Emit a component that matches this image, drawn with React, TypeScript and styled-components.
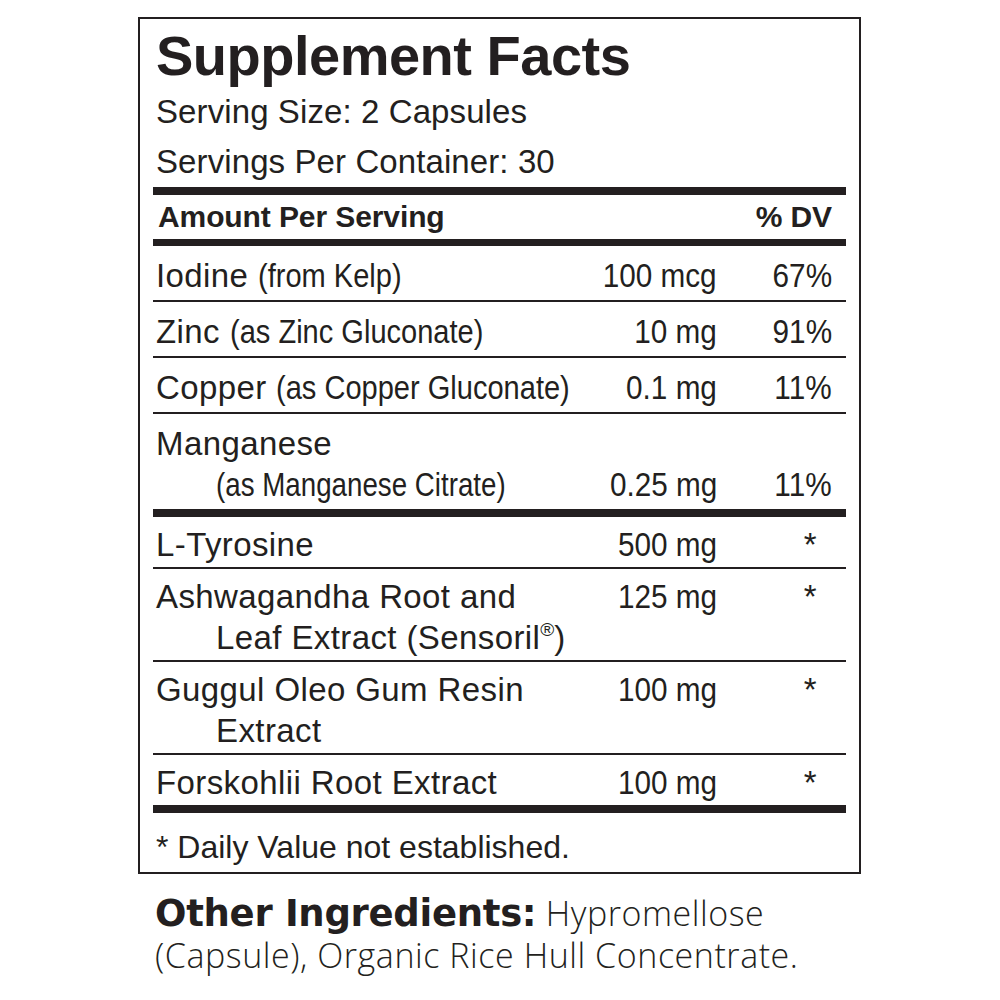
import React from "react";
import styled, { createGlobalStyle } from "styled-components";

const Global = createGlobalStyle`
  html, body { margin: 0; padding: 0; background: #ffffff; }
  body { font-family: "Liberation Sans", Arial, sans-serif; color: #231f20; }
`;

const Page = styled.div`
  padding: 17px 0 20px 138px;
`;

const Panel = styled.section`
  width: 723px;
  box-sizing: border-box;
  border: 2px solid #231f20;
  padding: 0 13px;
`;

const Title = styled.h1`
  margin: 0;
  padding: 7px 0 0 3px;
  font: 700 56px/60px "Liberation Sans", Arial, sans-serif;
  letter-spacing: -0.5px;
`;

const ServingInfo = styled.div`
  padding: 1px 0 0 3px;
`;

const InfoLine = styled.p`
  margin: 0;
  font: 400 33px/50px "Liberation Sans", Arial, sans-serif;
  letter-spacing: 0.1px;
`;

const Bar = styled.div<{ $h: number }>`
  height: ${(p) => p.$h}px;
  background: #231f20;
`;

const HeaderRow = styled.div`
  display: flex;
  justify-content: space-between;
  padding: 0 14px 0 5px;
  font: 700 30px/44px "Liberation Sans", Arial, sans-serif;
  letter-spacing: -0.1px;
`;

const Section = styled.div``;

const Row = styled.div<{ $loose?: boolean }>`
  display: grid;
  grid-template-columns: minmax(0, 1fr) auto 115px;
  padding: ${(p) => (p.$loose ? "9px 14px 4px 3px" : "7px 14px 2px 3px")};
  font: 400 33px/41px "Liberation Sans", Arial, sans-serif;
  letter-spacing: 0.4px;
  border-bottom: 2px solid #231f20;
  &:last-child {
    border-bottom: none;
  }
`;

const Label = styled.div`
  padding-left: 60px;
  text-indent: -60px;
  white-space: nowrap;
`;

const Cond = styled.span<{ $origin: "left" | "right"; $scale: number }>`
  display: inline-block;
  text-indent: 0;
  letter-spacing: 0;
  transform: scaleX(${(p) => p.$scale});
  transform-origin: ${(p) => p.$origin} center;
  white-space: nowrap;
`;

const Amount = styled.div<{ $end?: boolean }>`
  text-align: right;
  white-space: nowrap;
  align-self: ${(p) => (p.$end ? "end" : "start")};
`;

const DV = styled.div<{ $star?: boolean; $end?: boolean }>`
  text-align: right;
  padding-right: ${(p) => (p.$star ? "15px" : "0")};
  align-self: ${(p) => (p.$end ? "end" : "start")};
`;

const Reg = styled.sup`
  font-size: 19px;
  vertical-align: 13px;
  line-height: 0;
  letter-spacing: 0;
`;

const Note = styled.p`
  margin: 0;
  padding: 14px 0 5px 3px;
  font: 400 32px/40px "Liberation Sans", Arial, sans-serif;
  letter-spacing: 0;
`;

const Other = styled.p`
  margin: 18px 0 0;
  padding-left: 17px;
  font: 300 34px/41px "Open Sans", Lato, sans-serif;
  letter-spacing: 0.55px;
  color: #231f20;
`;

const OtherHead = styled.span`
  font: 700 37px "DejaVu Sans", sans-serif;
  letter-spacing: -0.3px;
`;

type Item = {
  main: string;
  sub?: string;
  subBreak?: boolean;
  second?: React.ReactNode;
  amount: string;
  dv: string;
};

const minerals: Item[] = [
  { main: "Iodine", sub: "(from Kelp)", amount: "100 mcg", dv: "67%" },
  { main: "Zinc", sub: "(as Zinc Gluconate)", amount: "10 mg", dv: "91%" },
  { main: "Copper", sub: "(as Copper Gluconate)", amount: "0.1 mg", dv: "11%" },
  { main: "Manganese", sub: "(as Manganese Citrate)", subBreak: true, amount: "0.25 mg", dv: "11%" },
];

const herbs: Item[] = [
  { main: "L-Tyrosine", amount: "500 mg", dv: "*" },
  {
    main: "Ashwagandha Root and",
    second: (
      <>
        Leaf Extract (Sensoril<Reg>®</Reg>)
      </>
    ),
    amount: "125 mg",
    dv: "*",
  },
  { main: "Guggul Oleo Gum Resin", second: "Extract", amount: "100 mg", dv: "*" },
  { main: "Forskohlii Root Extract", amount: "100 mg", dv: "*" },
];

const IngredientRow = ({ item, loose }: { item: Item; loose?: boolean }) => {
  const end = !!item.subBreak;
  return (
    <Row $loose={loose}>
      <Label>
        {item.main}
        {item.sub && (
          <>
            {item.subBreak ? <br /> : " "}
            <Cond $origin="left" $scale={item.subBreak ? 0.84 : 0.88}>
              {item.sub}
            </Cond>
          </>
        )}
        {item.second && (
          <>
            <br />
            {item.second}
          </>
        )}
      </Label>
      <Amount $end={end}>
        <Cond $origin="right" $scale={0.9}>
          {item.amount}
        </Cond>
      </Amount>
      {item.dv === "*" ? (
        <DV $star>*</DV>
      ) : (
        <DV $end={end}>
          <Cond $origin="right" $scale={0.9}>
            {item.dv}
          </Cond>
        </DV>
      )}
    </Row>
  );
};

export default function App() {
  return (
    <Page>
      <Global />
      <Panel>
        <Title>Supplement Facts</Title>
        <ServingInfo>
          <InfoLine>Serving Size: 2 Capsules</InfoLine>
          <InfoLine>Servings Per Container: 30</InfoLine>
        </ServingInfo>
        <Bar $h={8} />
        <HeaderRow>
          <span>Amount Per Serving</span>
          <span>% DV</span>
        </HeaderRow>
        <Bar $h={7} />
        <Section>
          {minerals.map((m) => (
            <IngredientRow key={m.main} item={m} loose />
          ))}
        </Section>
        <Bar $h={8} />
        <Section>
          {herbs.map((m) => (
            <IngredientRow key={m.main} item={m} />
          ))}
        </Section>
        <Bar $h={8} />
        <Note>* Daily Value not established.</Note>
      </Panel>
      <Other>
        <OtherHead>Other Ingredients:</OtherHead> Hypromellose
        <br />
        (Capsule), Organic Rice Hull Concentrate.
      </Other>
    </Page>
  );
}
